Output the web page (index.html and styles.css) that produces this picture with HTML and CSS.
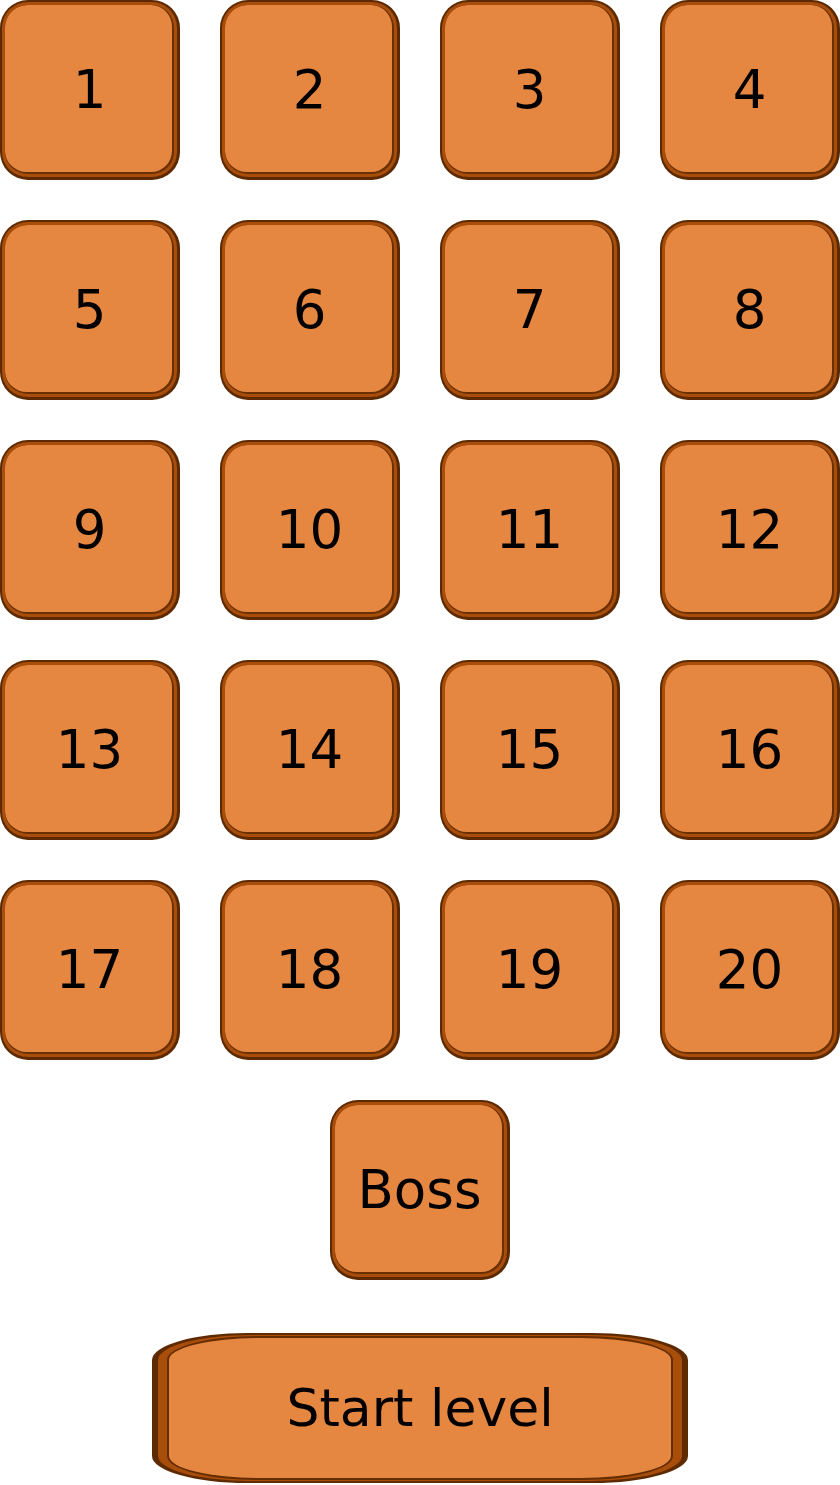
FILE: index.html
```html
<!DOCTYPE html>
<html>
<head>
<meta charset="utf-8">
<link rel="stylesheet" href="styles.css">
</head>
<body>
<div class="page">
  <div class="grid">
    <button class="tile">1</button>
    <button class="tile">2</button>
    <button class="tile">3</button>
    <button class="tile">4</button>
    <button class="tile">5</button>
    <button class="tile">6</button>
    <button class="tile">7</button>
    <button class="tile">8</button>
    <button class="tile">9</button>
    <button class="tile">10</button>
    <button class="tile">11</button>
    <button class="tile">12</button>
    <button class="tile">13</button>
    <button class="tile">14</button>
    <button class="tile">15</button>
    <button class="tile">16</button>
    <button class="tile">17</button>
    <button class="tile">18</button>
    <button class="tile">19</button>
    <button class="tile">20</button>
  </div>
  <div class="boss-row">
    <button class="tile">Boss</button>
  </div>
  <div class="start-row">
    <button class="start">Start level</button>
  </div>
</div>
</body>
</html>
```

FILE: styles.css
```css
html, body {
  margin: 0;
  padding: 0;
  background: #ffffff;
}

.page {
  width: 840px;
  display: flex;
  flex-direction: column;
  align-items: center;
  padding-bottom: 7px;
}

.grid {
  display: grid;
  grid-template-columns: repeat(4, 180px);
  grid-auto-rows: 180px;
  column-gap: 40px;
  row-gap: 40px;
}

.tile {
  box-sizing: border-box;
  width: 180px;
  height: 180px;
  margin: 0;
  padding: 0;
  border-style: solid;
  border-color: #5c2900;
  border-width: 2px 3px 3px 2px;
  border-radius: 28px;
  background: #e58741;
  box-shadow:
    inset 0 0 0 3px #a84d0a,
    inset -1px -1px 0 4px #6a3003;
  font-family: "DejaVu Sans", sans-serif;
  font-size: 53px;
  color: #000000;
  display: flex;
  align-items: center;
  justify-content: center;
  line-height: 1;
}

.boss-row {
  margin-top: 40px;
  display: flex;
  justify-content: center;
}

.start-row {
  margin-top: 58px;
  display: flex;
  justify-content: center;
}

.start {
  box-sizing: border-box;
  width: 502px;
  height: 140px;
  margin: 0;
  padding: 0;
  border: none;
  border-radius: 90px / 22px;
  background: #e58741;
  box-shadow:
    0 0 0 2px #632d00,
    -8px 0 0 3px #a84d0a,
    8px 0 0 3px #a84d0a,
    -12px 0 0 5px #5e2a00,
    12px 0 0 5px #5e2a00;
  font-family: "DejaVu Sans", sans-serif;
  font-size: 52px;
  color: #000000;
  line-height: 1;
}
```
